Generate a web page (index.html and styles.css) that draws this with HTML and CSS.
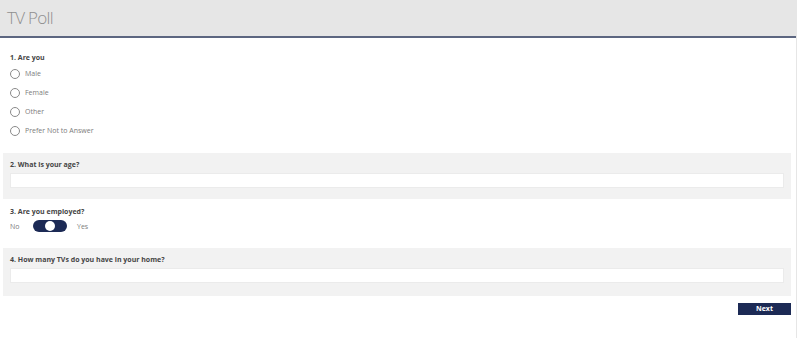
FILE: index.html
```html
<!DOCTYPE html>
<html>
<head>
<meta charset="utf-8">
<title>TV Poll</title>
<link rel="stylesheet" href="styles.css">
</head>
<body>
<div class="page">
  <header class="header"><h1 class="title">TV Poll</h1></header>
  <main class="form">
    <section class="q q-plain q1">
      <div class="q-title">1. Are you</div>
      <div class="options">
        <label class="opt"><span class="radio"></span><span>Male</span></label>
        <label class="opt"><span class="radio"></span><span>Female</span></label>
        <label class="opt"><span class="radio"></span><span>Other</span></label>
        <label class="opt"><span class="radio"></span><span>Prefer Not to Answer</span></label>
      </div>
    </section>
    <section class="q q-shaded q2">
      <div class="q-title">2. What is your age?</div>
      <div class="input"></div>
    </section>
    <section class="q q-plain q3">
      <div class="q-title">3. Are you employed?</div>
      <div class="toggle-row">
        <span class="tlabel">No</span>
        <span class="toggle"><span class="knob"></span></span>
        <span class="tlabel">Yes</span>
      </div>
    </section>
    <section class="q q-shaded q4">
      <div class="q-title">4. How many TVs do you have in your home?</div>
      <div class="input"></div>
    </section>
    <div class="actions"><button class="next">Next</button></div>
  </main>
</div>
</body>
</html>
```
FILE: styles.css
```css
html, body { margin: 0; padding: 0; background: #fff; }
body { font-family: "Open Sans", "Noto Sans", sans-serif; }
.page { width: 797px; min-height: 338px; border-right: 1px solid #e6e6e6; box-sizing: border-box; }
.header { height: 36px; background: #e6e6e6; border-bottom: 2px solid #5c6680; display: flex; align-items: center; padding-left: 7px; }
.title { margin: 0; font-size: 17px; font-weight: 300; color: #8f8f8f; letter-spacing: -0.7px; line-height: 1; padding-bottom: 1px; }
.form { display: flex; flex-direction: column; }
.q { margin: 0 5px 0 3px; padding: 0 7px; }
.q-title { font-size: 7px; font-weight: 700; color: #454545; line-height: 12px; height: 12px; }
.q1 { margin-top: 14px; }
.options { display: flex; flex-direction: column; }
.opt { display: flex; align-items: center; height: 19px; font-size: 7px; color: #7c7c7c; }
.radio { width: 8px; height: 8px; border: 1px solid #8a8a8a; border-radius: 50%; margin-right: 5px; background: #fff; }
.q-shaded { background: #f2f2f2; padding-top: 6px; }
.q2 { margin-top: 13px; padding-bottom: 11px; }
.q4 { margin-top: 14px; padding-bottom: 13px; }
.input { margin-top: 2px; height: 13px; background: #fff; border: 1px solid #ebebeb; }
.q3 { margin-top: 7px; }
.toggle-row { display: flex; align-items: center; height: 16px; font-size: 7px; color: #7c7c7c; }
.tlabel:first-child { width: 23px; }
.toggle { width: 34px; height: 12px; border-radius: 6px; background: #1c2a55; display: flex; align-items: center; justify-content: center; margin-right: 10px; }
.knob { width: 10px; height: 10px; border-radius: 50%; background: #fff; }
.actions { display: flex; justify-content: flex-end; margin: 7px 5px 0 0; }
.next { width: 53px; height: 12px; padding: 0; border: none; background: #1c2a55; color: #fff; font-family: "Open Sans", "Noto Sans", sans-serif; font-size: 7px; font-weight: 700; line-height: 12px; }
```
